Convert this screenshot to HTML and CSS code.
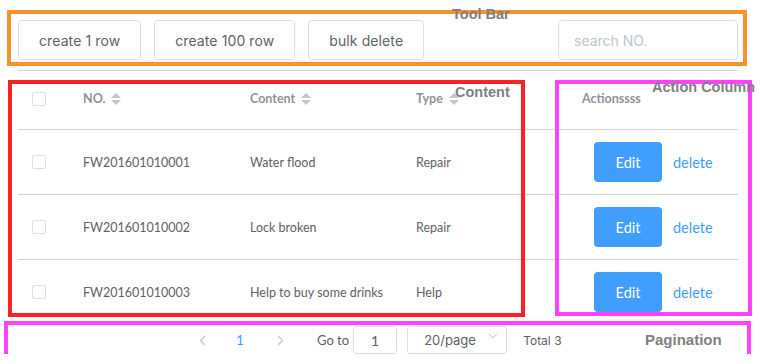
FILE: index.html
```html
<!DOCTYPE html>
<html>
	<head>
		<meta charset="utf-8">
		<title>table demo</title>
		<link rel="stylesheet" href="styles.css">
	</head>
	<body>
		<div class="page">
			<div class="toolbar">
				<button class="btn">create 1 row</button>
				<button class="btn">create 100 row</button>
				<button class="btn">bulk delete</button>
				<input class="search" placeholder="search NO.">
			</div>

			<div class="table">
				<div class="row head">
					<div class="cell check"><span class="checkbox"></span></div>
					<div class="cell">NO.<span class="sort"><i class="up"></i><i class="down"></i></span></div>
					<div class="cell">Content<span class="sort"><i class="up"></i><i class="down"></i></span></div>
					<div class="cell">Type<span class="sort"><i class="up"></i><i class="down"></i></span></div>
					<div class="cell">Actionssss</div>
				</div>
				<div class="row">
					<div class="cell check"><span class="checkbox"></span></div>
					<div class="cell">FW201601010001</div>
					<div class="cell">Water flood</div>
					<div class="cell">Repair</div>
					<div class="cell actions"><button class="edit">Edit</button><a class="link">delete</a></div>
				</div>
				<div class="row">
					<div class="cell check"><span class="checkbox"></span></div>
					<div class="cell">FW201601010002</div>
					<div class="cell">Lock broken</div>
					<div class="cell">Repair</div>
					<div class="cell actions"><button class="edit">Edit</button><a class="link">delete</a></div>
				</div>
				<div class="row">
					<div class="cell check"><span class="checkbox"></span></div>
					<div class="cell">FW201601010003</div>
					<div class="cell">Help to buy some drinks</div>
					<div class="cell">Help</div>
					<div class="cell actions"><button class="edit">Edit</button><a class="link">delete</a></div>
				</div>
			</div>

			<div class="pager">
				<span class="nav"><svg width="7" height="11" viewBox="0 0 7 11"><polyline points="6,1 1.5,5.5 6,10" fill="none" stroke="#c0c4cc" stroke-width="1.2"/></svg></span>
				<span class="num">1</span>
				<span class="nav"><svg width="7" height="11" viewBox="0 0 7 11"><polyline points="1,1 5.5,5.5 1,10" fill="none" stroke="#c0c4cc" stroke-width="1.2"/></svg></span>
				<span class="goto">Go to</span>
				<span class="jump">1</span>
				<span class="size">20/page<svg class="caret" width="10" height="6" viewBox="0 0 10 6"><polyline points="1,1 5,5 9,1" fill="none" stroke="#c0c4cc" stroke-width="1"/></svg></span>
				<span class="total">Total 3</span>
			</div>
		</div>

		<!-- annotation frames -->
		<div class="frame orange f-toolbar"></div>
		<div class="frame red f-content"></div>
		<div class="frame pink f-actions"></div>
		<div class="frame pink f-pager"></div>
		<span class="label l-toolbar">Tool Bar</span>
		<span class="label l-content">Content</span>
		<span class="label l-actions">Action Column</span>
		<span class="label l-pager">Pagination</span>
	</body>
</html>
```

FILE: styles.css
```css
* {
	box-sizing: border-box;
}

body {
	margin: 0;
	position: relative;
	background: #fff;
	font-family: Lato, "Noto Sans", sans-serif;
	color: #606266;
	overflow: hidden;
}

.page {
	width: 760px;
	padding: 0 22px 0 18px;
}

.toolbar {
	display: flex;
	gap: 13px;
	padding: 20px 0 10px;
	border-bottom: 1px solid #d4d4d4;
}

.btn {
	height: 40px;
	padding: 0 20px;
	border: 1px solid #dcdfe6;
	border-radius: 4px;
	background: #fff;
	color: #606266;
	font-family: Inter, "Liberation Sans", sans-serif;
	font-size: 14px;
	letter-spacing: 0.1px;
}

.search {
	margin-left: auto;
	width: 180px;
	height: 40px;
	padding: 0 15px;
	border: 1px solid #dcdfe6;
	border-radius: 4px;
	font-family: Inter, "Liberation Sans", sans-serif;
	font-size: 14px;
}

.search::placeholder {
	color: #c0c4cc;
}

.row {
	display: grid;
	grid-template-columns: 53px 167px 166px 166px 168px;
	height: 65px;
	border-bottom: 1px solid #d4d4d4;
	font-size: 12.5px;
}

.row.head {
	height: 59px;
	padding-bottom: 3px;
	color: #909399;
	font-weight: bold;
}

.cell {
	display: flex;
	align-items: center;
	padding-left: 12px;
}

.cell.check {
	padding-left: 14px;
}

.checkbox {
	width: 14px;
	height: 14px;
	border: 1px solid #dcdfe6;
	border-radius: 2px;
	background: #fff;
}

.sort {
	display: inline-flex;
	flex-direction: column;
	gap: 2px;
	margin-left: 6px;
}

.sort i {
	width: 0;
	height: 0;
	border-left: 5px solid transparent;
	border-right: 5px solid transparent;
}

.sort .up {
	border-bottom: 5px solid #c0c4cc;
}

.sort .down {
	border-top: 5px solid #c0c4cc;
}

.actions {
	padding-left: 24px;
	gap: 11px;
}

.edit {
	width: 68px;
	height: 40px;
	border: none;
	border-radius: 4px;
	background: #409eff;
	color: #fff;
	font-family: Lato, sans-serif;
	font-size: 14.5px;
}

.link {
	color: #409eff;
	font-size: 14.5px;
}

.pager {
	display: flex;
	align-items: center;
	height: 28px;
	margin-top: 1px;
	padding-left: 166px;
	font-size: 13px;
}

.nav, .num {
	width: 36px;
	display: flex;
	justify-content: center;
}

.nav + .num, .num + .nav {
	margin-left: 2px;
}

.num {
	color: #409eff;
	margin-right: 2px;
}

.goto {
	margin-left: 19px;
}

.jump {
	width: 44px;
	height: 28px;
	margin-left: 4px;
	border: 1px solid #dcdfe6;
	border-radius: 3px;
	display: flex;
	align-items: center;
	justify-content: center;
	font-size: 14px;
}

.size {
	position: relative;
	width: 100px;
	height: 28px;
	margin-left: 10px;
	padding-left: 16px;
	border: 1px solid #dcdfe6;
	border-radius: 3px;
	display: flex;
	align-items: center;
	font-family: Inter, sans-serif;
	font-size: 13px;
}

.caret {
	position: absolute;
	right: 8px;
	top: 6px;
}

.total {
	margin-left: 16px;
	font-family: Inter, sans-serif;
	font-size: 12px;
}

.frame {
	position: absolute;
	border: 4px solid;
}

.orange { border-color: #f7932c; }
.red { border-color: #ff2121; }
.pink { border-color: #ff42ff; }

.f-toolbar { left: 7px; top: 10px; width: 740px; height: 56px; }
.f-content { left: 8px; top: 80px; width: 517px; height: 237px; }
.f-actions { left: 555px; top: 80px; width: 197px; height: 236px; }
.f-pager { left: 4px; top: 321px; width: 747px; height: 38px; }

.label {
	position: absolute;
	font-family: "Liberation Sans", Arial, sans-serif;
	font-weight: bold;
	font-size: 14.5px;
	line-height: 18px;
	color: #7f7f7f;
	white-space: nowrap;
}

.l-toolbar { left: 452px; top: 5px; }
.l-content { left: 455px; top: 83px; }
.l-actions { left: 652px; top: 78px; }
.l-pager { left: 645px; top: 331px; font-size: 15px; }
```
